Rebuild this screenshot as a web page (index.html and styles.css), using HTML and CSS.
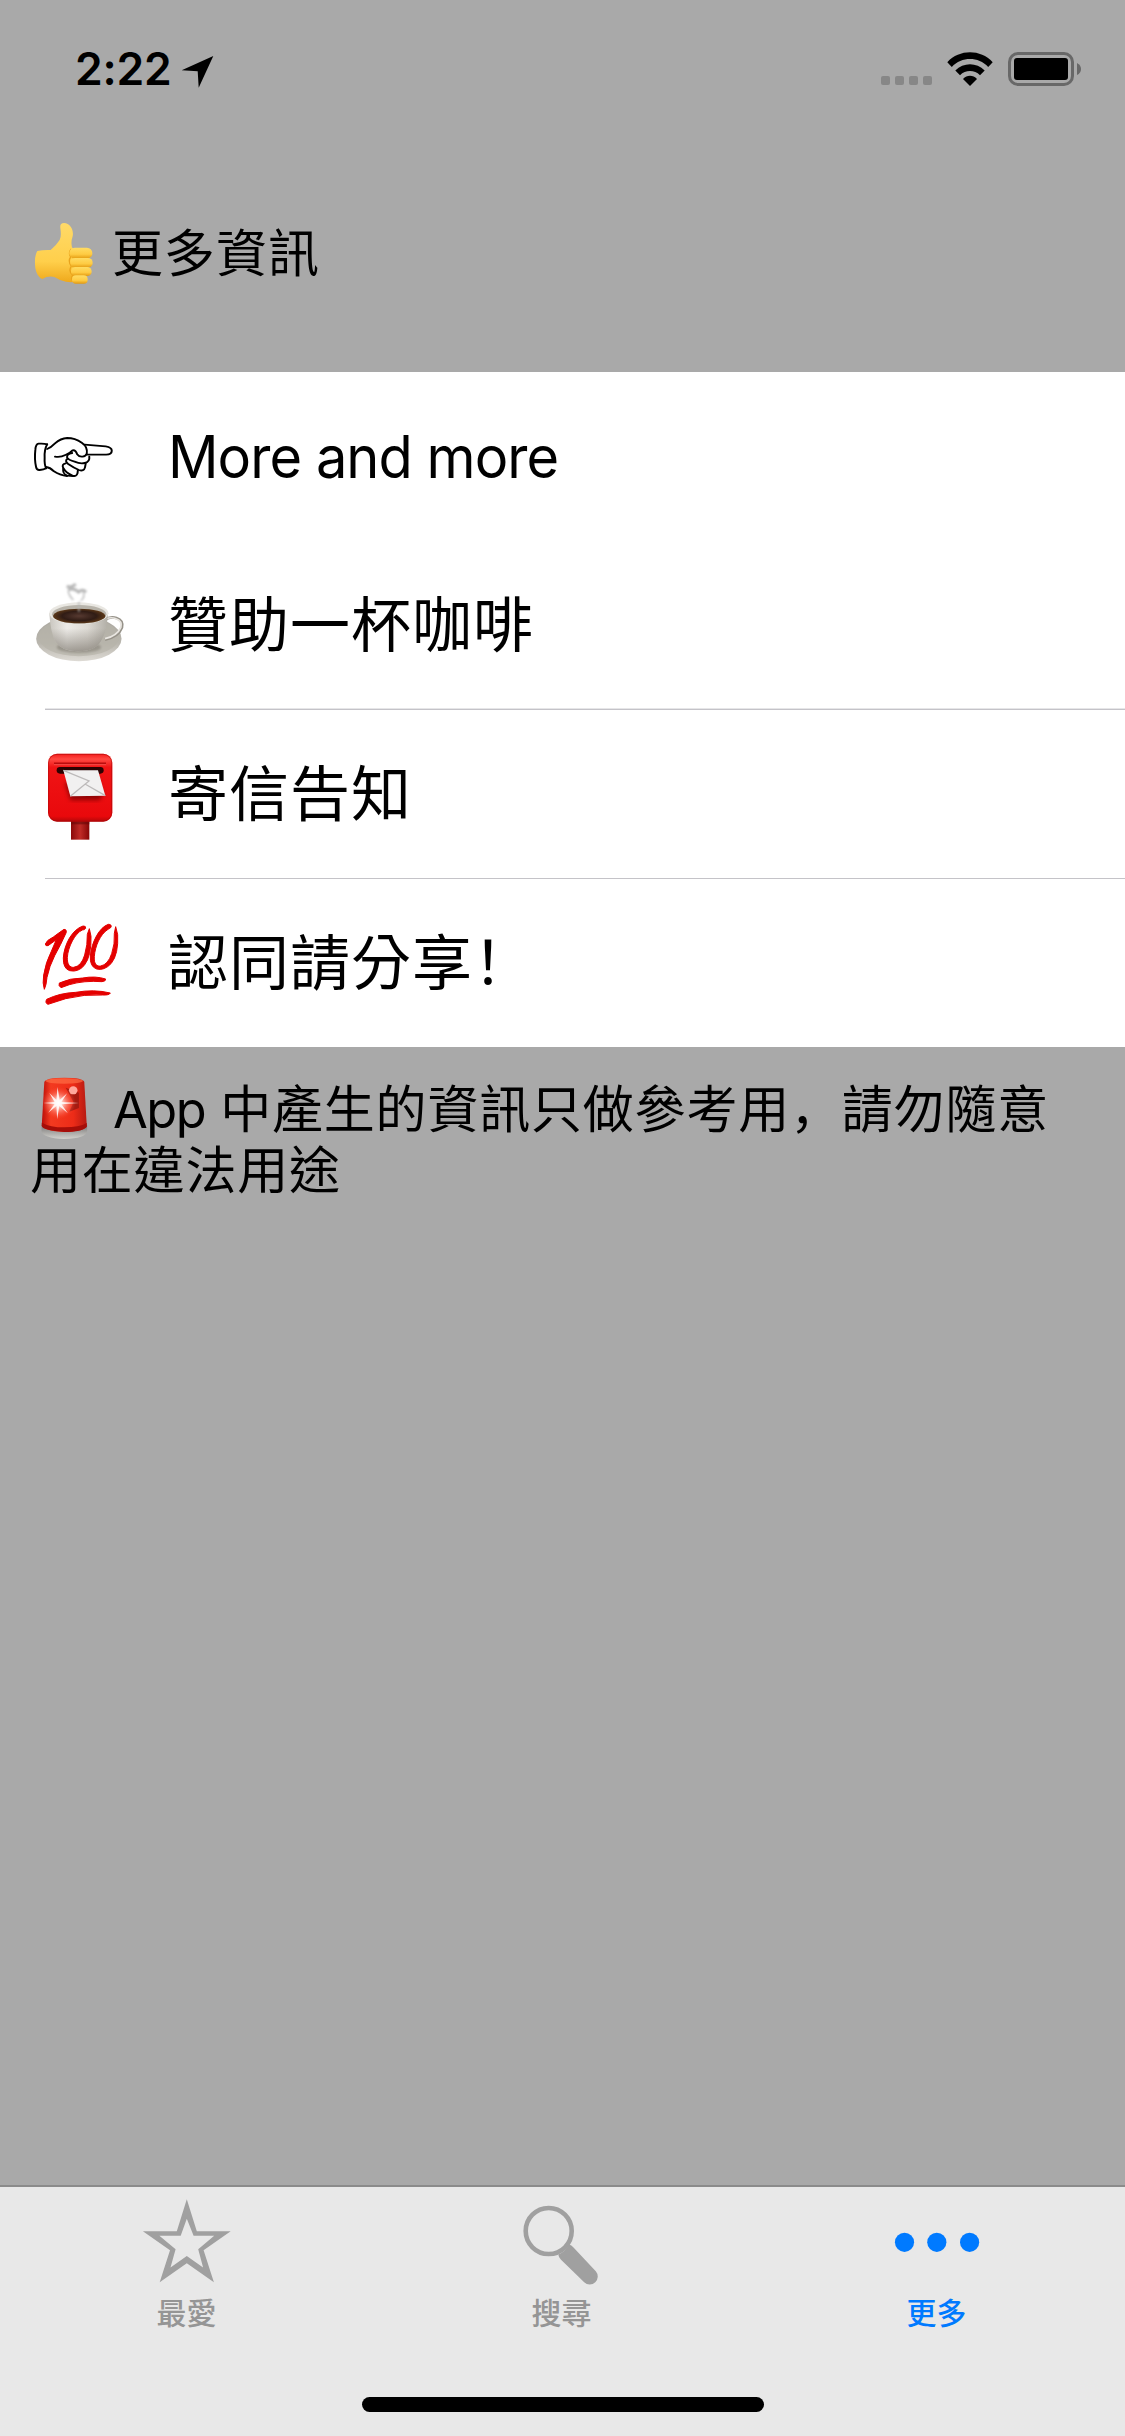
FILE: index.html
```html
<!DOCTYPE html>
<html lang="zh-Hant">
<head>
<meta charset="utf-8">
<title>更多資訊</title>
<link rel="stylesheet" href="styles.css">
</head>
<body>
<div class="screen">
  <header class="status">
    <div class="status-left">
      <span class="time">2:22</span>
      <svg class="location" viewBox="0 0 33 33"><path d="M.7 15.3 32.3 1 17.7 32.7 16.7 16.3Z"/></svg>
    </div>
    <div class="status-right">
      <div class="signal"><i></i><i></i><i></i><i></i></div>
      <svg class="wifi" viewBox="0 0 46 34">
        <path d="M.3 10.2C12.5-3 33.500-3 45.700 10.200L41.200 14.900C31.200 4.500 14.800 4.500 4.800 14.900Z"/>
        <path d="M8.300 18.500C16.500 10 29.500 10 37.700 18.500L33 23.200C27.500 17.700 18.500 17.700 13 23.200Z"/>
        <path d="M16 27C20 22.800 26 22.800 30 27L23 34Z"/>
      </svg>
      <svg class="battery" viewBox="0 0 74 34">
        <rect x="1.500" y="1.500" width="63" height="31" rx="8.500" fill="none" stroke="#686868" stroke-width="3"/>
        <rect x="6" y="6" width="54" height="22" rx="3"/>
        <path d="M69 11Q73 13 73 17T69 23Z" fill="#686868"/>
      </svg>
    </div>
  </header>

  <h1 class="section-title">
    <svg class="emoji-sm" viewBox="36 66 192 192">
      <defs>
        <linearGradient id="skin" x2="0" y2="1"><stop offset="0" stop-color="#ffda68"/><stop offset=".65" stop-color="#ffcf4b"/><stop offset="1" stop-color="#efa91c"/></linearGradient>
        <linearGradient id="finger" x2="0" y2="1"><stop offset="0" stop-color="#ffdc63"/><stop offset=".6" stop-color="#fecb43"/><stop offset="1" stop-color="#e39a10"/></linearGradient>
      </defs>
      <path fill="url(#skin)" d="M52 153Q70 149 92 150Q108 137 119 120Q125 110 121 84Q119 69 132 69C151 69 162 91 158 109Q152 126 156 142L180 170L180 242Q158 249 138 245Q116 240 103 231Q84 227 67 237Q51 232 46 205Q42 168 52 153Z"/>
      <path d="M154 147Q144 158 152 171Q143 184 154 198Q144 214 158 225Q150 239 163 246" fill="none" stroke="#e9a31c" stroke-width="4"/>
      <rect x="148" y="143" width="69" height="33" rx="16" fill="url(#finger)"/>
      <rect x="151" y="174" width="67" height="29" rx="14" fill="url(#finger)"/>
      <rect x="153" y="201" width="62" height="27" rx="13" fill="url(#finger)"/>
      <rect x="156" y="226" width="47" height="25" rx="12" fill="url(#finger)"/>
    </svg><span>更多資訊</span>
  </h1>

  <ul class="list">
    <li class="row">
      <span class="icon"><svg class="hand" viewBox="33.600 216 235.200 144" preserveAspectRatio="none">
        <g fill="none" stroke="#000" stroke-width="5.500" stroke-linejoin="round" stroke-linecap="round">
          <path d="M76 250Q68 247 52 248Q44 249 43 266Q40 295 45 318Q47 328 55 327Q67 326 73 322"/>
          <path d="M76 250Q68 265 69 289Q68 310 73 322"/>
          <path d="M76 264Q86 260 98 247Q114 232 132 231Q154 231 173 245Q190 257 187 278Q184 286 175 287Q165 288 160 280Q156 266 147 268Q140 277 127 282Q114 290 98 287"/>
          <path d="M181 251 240 256Q257 259 257 269Q257 280 241 281L190 281"/>
          <path d="M73 318Q84 319 95 331Q111 343 132 345"/>
          <path d="M146 276Q130 278 132 290Q136 297 153 302Q168 309 181 306Q196 303 194 287"/>
          <path d="M133 293Q124 300 135 309Q150 320 165 327Q179 332 182 319L184 307"/>
          <path d="M128 307Q116 309 121 321Q129 336 147 344Q158 348 161 337L162 328"/>
          <path d="M121 324Q119 338 132 344L149 345"/>
        </g></svg></span>
      <span class="label latin">More and more</span>
    </li>
    <li class="row">
      <span class="icon"><svg class="coffee" viewBox="40.700 60 267.200 252" preserveAspectRatio="none">
        <defs>
          <linearGradient id="cup"><stop offset="0" stop-color="#c9c6bf"/><stop offset=".3" stop-color="#edebe7"/><stop offset=".65" stop-color="#dddad4"/><stop offset="1" stop-color="#b1aea6"/></linearGradient>
          <linearGradient id="shade" x2="0" y2="1"><stop offset=".4" stop-color="#777168" stop-opacity="0"/><stop offset="1" stop-color="#777168" stop-opacity=".65"/></linearGradient>
          <linearGradient id="saucer" x2="0" y2="1"><stop offset="0" stop-color="#aaa79f"/><stop offset=".6" stop-color="#b9b6ae"/><stop offset="1" stop-color="#dedbd5"/></linearGradient>
          <radialGradient id="brew"><stop offset="0" stop-color="#573a31"/><stop offset=".65" stop-color="#301c15"/><stop offset="1" stop-color="#5c3818"/></radialGradient>
          <filter id="mist"><feGaussianBlur stdDeviation="3"/></filter>
        </defs>
        <ellipse cx="171" cy="236" rx="124" ry="68" fill="url(#saucer)"/>
        <ellipse cx="171" cy="231" rx="117" ry="58" fill="#b6b3aa" opacity=".7"/>
        <ellipse cx="171" cy="262" rx="64" ry="17" fill="#89857b" opacity=".65" filter="url(#mist)"/>
        <path d="M246 180Q262 168 280 174Q301 181 296 203Q286 231 247 239" fill="none" stroke="#969289" stroke-width="8"/>
        <path d="M249 177Q265 170 279 176Q298 183 293 202Q282 228 247 236" fill="none" stroke="#e9e6e1" stroke-width="5"/>
        <path d="M85 159Q89 220 103 245Q122 274 169 274Q218 274 235 244Q252 216 256 159Z" fill="url(#cup)"/>
        <path d="M85 159Q89 220 103 245Q122 274 169 274Q218 274 235 244Q252 216 256 159Z" fill="url(#shade)"/>
        <ellipse cx="171" cy="160" rx="86" ry="33" fill="#e9e7e2"/>
        <ellipse cx="172" cy="163" rx="79" ry="28" fill="#b8b4ab"/>
        <ellipse cx="172" cy="168" rx="76" ry="22" fill="url(#brew)"/>
        <g fill="none" stroke="#b8b8b8" filter="url(#mist)"><path d="M136 78Q148 86 162 72M140 90Q156 82 170 96Q182 86 192 97" stroke-width="9"/><path d="M140 92Q141 106 155 120M184 98Q190 110 177 122M171 125V155" stroke-width="4"/></g>
      </svg></span>
      <span class="label">贊助一杯咖啡</span>
    </li>
    <li class="row ruled">
      <span class="icon"><svg class="postbox" viewBox="78 66 204 267">
        <defs>
          <linearGradient id="box" x2="0" y2="1"><stop offset="0" stop-color="#f31a19"/><stop offset=".08" stop-color="#ff4942"/><stop offset=".2" stop-color="#f01415"/><stop offset=".92" stop-color="#e9090c"/><stop offset="1" stop-color="#b40709"/></linearGradient>
          <linearGradient id="post"><stop offset="0" stop-color="#8b0909"/><stop offset=".5" stop-color="#c02b27"/><stop offset="1" stop-color="#870606"/></linearGradient>
          <filter id="soft"><feGaussianBlur stdDeviation="6"/></filter>
        </defs>
        <path d="M153 268H208V329H153Z" fill="url(#post)"/><path d="M153 272H208V283H153Z" fill="#650707" opacity=".6"/>
        <rect x="84" y="71" width="193" height="204" rx="27" fill="url(#box)"/>
        <rect x="86" y="73" width="189" height="200" rx="25" fill="none" stroke="#a70708" stroke-width="3" opacity=".55"/>
        <path d="M102 100H258" stroke="#b90c0d" stroke-width="5"/><path d="M102 104H258" stroke="#ff625c" stroke-width="2"/>
        <path d="M135 160 152 211H238L249 195 230 135Z" fill="#730000" opacity=".75" filter="url(#soft)"/>
        <rect x="110" y="111" width="141" height="20" rx="10" fill="#2d0202"/>
        <path d="M130 121H234L256 197L151 199Z" fill="#f1f0f0"/>
        <path d="M130 121 207 153 151 199M195 162 256 197" fill="none" stroke="#bdbaba" stroke-width="4"/>
      </svg></span>
      <span class="label">寄信告知</span>
    </li>
    <li class="row ruled">
      <span class="icon"><svg class="hundred" viewBox="66 96 234 252">
        <g fill="#e40000" stroke="#e40000" stroke-width="3">
          <path d="M76 162Q79 151 100 141Q116 129 132 118Q142 119 138 129Q123 163 104 197Q88 228 81 262Q79 286 73 298Q67 281 71 255Q77 217 94 184L109 149Q94 160 84 167Q76 169 76 162Z"/>
          <path d="M189 108Q198 107 197 115Q194 120 187 120C165 129 144 171 142 202C141 224 150 233 161 232Q184 229 194 195Q203 164 202 133L208 116L213 139Q215 197 193 226Q174 248 149 242Q129 236 130 204C132 166 155 119 189 108Z"/>
          <path d="M265 103Q276 103 273 112L264 118C240 133 225 170 223 199C221 223 231 230 242 228Q264 224 275 191Q285 163 283 130L287 110L293 134Q296 192 274 220Q253 243 230 237Q209 230 211 198C215 155 239 111 265 103Z"/>
          <path d="M118 279Q150 264 188 264Q226 257 257 267Q258 274 246 275Q192 271 148 284L123 293Q114 287 118 279Z"/>
          <path d="M80 328Q119 309 167 307Q222 297 271 309Q268 316 248 315Q193 312 137 326L84 343Q74 339 80 328Z"/>
        </g></svg></span>
      <span class="label">認同請分享<span class="punct" lang="zh-Hans">！</span></span>
    </li>
  </ul>

  <p class="note"><svg class="emoji-sm siren" viewBox="33.600 48 179.200 192" preserveAspectRatio="none">
      <defs>
        <linearGradient id="lamp"><stop offset="0" stop-color="#b90d08"/><stop offset=".2" stop-color="#f33a20"/><stop offset=".7" stop-color="#ed2c18"/><stop offset="1" stop-color="#b51a12"/></linearGradient>
        <linearGradient id="base" x2="0" y2="1"><stop offset="0" stop-color="#777"/><stop offset="1" stop-color="#d3d2cd"/></linearGradient>
        <radialGradient id="flash"><stop offset="0" stop-color="#fff"/><stop offset=".25" stop-color="#ffc3b9"/><stop offset="1" stop-color="#ff4730" stop-opacity="0"/></radialGradient>
      </defs>
      <path d="M61 195H188V213Q185 236 123 237Q64 234 60 213Z" fill="url(#base)"/>
      <path d="M68 66Q72 53 124 53Q177 53 180 66L187 199Q182 214 124 216Q65 213 61 196Z" fill="url(#lamp)"/>
      <path d="M61 188Q84 202 124 202Q166 202 187 189V200Q174 216 124 216Q66 212 61 199Z" fill="#a50e09"/>
      <ellipse cx="124" cy="63" rx="52" ry="8" fill="#ff7248" opacity=".65"/>
      <path d="M128 83 165 98V144L138 155L150 127Z" fill="#8d160f" opacity=".7"/>
      <ellipse cx="149" cy="91" rx="12" ry="12" fill="#ffa79c"/>
      <circle cx="108" cy="129" r="48" fill="url(#flash)"/>
      <path d="M105 81 111 120 132 100 116 126 165 129 116 133 134 160 110 138 104 178 102 138 79 158 97 132 65 129 97 126 82 99 102 120Z" fill="#fff" opacity=".85"/>
    </svg><span class="app">App</span>中產生的資訊只做參考用<span class="punct" lang="zh-Hans">，</span>請勿隨意<br>用在違法用途</p>

  <nav class="tabs">
    <a class="tab">
      <svg class="tab-icon" viewBox="141 2198 92 90"><path fill="#a0a0a0" fill-rule="evenodd" d="M186.800 2199.300 196.800 2231.300H230.700L203.600 2250.300 213.900 2282.300 186.800 2263.300 159.700 2282.300 170 2250.300 142.900 2231.300H176.800ZM186.800 2218.700 180.700 2235.700H159.400L175.600 2249.300 170.500 2267.500 186.800 2256.100 203.100 2267.500 198.200 2249.300 214.200 2235.700H193.600Z"/></svg>
      <span>最愛</span>
    </a>
    <a class="tab">
      <svg class="tab-icon" viewBox="515.500 2198 92 90"><circle cx="548.200" cy="2231" r="23" fill="none" stroke="#a0a0a0" stroke-width="4.600"/><path fill="#a0a0a0" d="M557.800 2254.500Q565 2251.500 568.500 2244.500Q571 2245 573 2247.500L595.300 2271.200A8 8 0 0 1 583.700 2282.200L560.300 2259.500Q558 2257 557.800 2254.500Z"/></svg>
      <span>搜尋</span>
    </a>
    <a class="tab active">
      <svg class="tab-icon" viewBox="891 2198 92 90"><g fill="#007aff"><circle cx="904.500" cy="2242.300" r="9.600"/><circle cx="936.800" cy="2242.300" r="9.600"/><circle cx="969.600" cy="2242.300" r="9.600"/></g></svg>
      <span>更多</span>
    </a>
    <div class="home"></div>
  </nav>
</div>
</body>
</html>
```

FILE: styles.css
```css
* { box-sizing: border-box; }
body { margin: 0; }
svg { display: block; flex: none; }

.screen {
  display: flex;
  flex-direction: column;
  width: 1125px;
  height: 2436px;
  background: #a9a9a9;
  color: #000;
  font-family: "Noto Sans CJK TC", sans-serif;
}

.status {
  display: flex;
  justify-content: space-between;
  height: 132px;
  padding: 52px 43px 0 75px;
}
.status-left { display: flex; gap: 11px; }
.time {
  width: 95px;
  height: 34px;
  font: 600 44.500px/34px Inter, sans-serif;
  letter-spacing: -.2px;
}
.location { width: 33px; height: 33px; margin-top: 3px; }
.status-right { display: flex; }
.signal { display: flex; gap: 5px; margin: 24px 15px 0 0; }
.signal i { width: 9px; height: 9px; border-radius: 2px; background: #878787; }
.wifi { width: 46px; height: 34px; margin-right: 15px; }
.battery { width: 74px; height: 34px; }

.section-title {
  display: flex;
  align-items: center;
  height: 240px;
  margin: 0;
  padding: 3px 32px 0;
  font-size: 51px;
  font-weight: 400;
  line-height: 61px;
  letter-spacing: 1px;
}
.section-title span { margin: -6px 0 0 16px; }
.emoji-sm { width: 64px; height: 64px; }

.list { margin: 0; padding: 0; list-style: none; background: #fff; }
.row {
  display: flex;
  position: relative;
  align-items: center;
  height: 169px;
  padding-left: 32px;
}
.row:last-child { height: 168px; }
.ruled::before {
  content: "";
  position: absolute;
  top: -1px;
  left: 45px;
  right: 0;
  height: 1px;
  background: #c4c3c8;
}
.ruled:nth-child(3)::before { box-shadow: 0 -1px #e6e6e8; }
.icon { width: 136px; flex: none; }
.label {
  padding-bottom: 9px;
  font-size: 60px;
  line-height: 80px;
  letter-spacing: 1px;
  white-space: nowrap;
}
.punct { font-family: "Noto Sans CJK SC", sans-serif; }
.latin {
  padding-bottom: 0;
  font-family: Inter, sans-serif;
  font-size: 58.500px;
  letter-spacing: -1px;
  transform: scaleX(.957);
  transform-origin: left;
}
.hand { width: 84px; height: 48px; }
.coffee { width: 92px; height: 84px; margin: -8px 0 0 2px; }
.postbox { width: 68px; height: 89px; margin: 3px 0 0 14px; }
.hundred { width: 78px; height: 84px; margin: 2px 0 0 10px; }

.note {
  margin: 0;
  padding: 29px 0 0 30px;
  font-size: 51px;
  line-height: 61px;
  letter-spacing: .8px;
  white-space: nowrap;
}
.siren { display: inline-block; vertical-align: top; margin: 0 17px -4px 2px; }
.app {
  margin-right: 15px;
  font-family: Inter, sans-serif;
  font-size: 50.500px;
  line-height: 1;
  letter-spacing: -1.500px;
}

.tabs {
  display: grid;
  grid-template-columns: repeat(3, 1fr);
  grid-template-rows: 210px 15px;
  height: 251px;
  margin-top: auto;
  border-top: 2px solid #8b8b8b;
  background: #e8e8e8;
}
.tab {
  display: flex;
  flex-direction: column;
  align-items: center;
  padding: 11px 2px 0 0;
  color: #959595;
  font-size: 30px;
  font-weight: 500;
  line-height: 36px;
}
.tab-icon { width: 92px; height: 90px; margin-bottom: 5px; }
.active { color: #007aff; }
.home {
  grid-column: 1 / -1;
  justify-self: center;
  width: 402px;
  height: 15px;
  border-radius: 8px;
  background: #000;
}
```
